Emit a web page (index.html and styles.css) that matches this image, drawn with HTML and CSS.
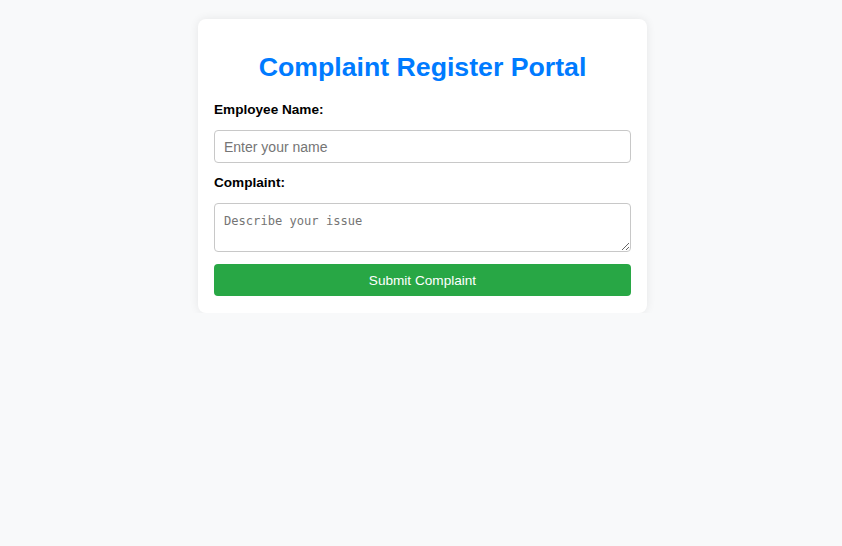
FILE: index.html
```html
<!DOCTYPE html>
<html lang="en">
<head>
<meta charset="UTF-8">
<title>Complaint Register Portal</title>
<link rel="stylesheet" href="styles.css">
</head>
<body>
<div class="page">
  <div class="card">
    <h2 class="title">Complaint Register Portal</h2>
    <form class="form">
      <label class="label" for="name">Employee Name:</label>
      <input class="field" id="name" type="text" placeholder="Enter your name">
      <label class="label" for="complaint">Complaint:</label>
      <textarea class="area" id="complaint" placeholder="Describe your issue"></textarea>
      <button class="submit" type="button">Submit Complaint</button>
    </form>
  </div>
</div>
</body>
</html>
```

FILE: styles.css
```css
html, body {
  margin: 0;
  padding: 0;
  background: #f8f9fa;
  font-family: "Liberation Sans", Arial, sans-serif;
}
.page {
  padding: 19px 0 0 3px;
}
.card {
  width: 417px;
  margin: 0 auto;
  padding: 16px 16px 17px;
  background: #ffffff;
  border-radius: 8px;
  box-shadow: 0 0 10px rgba(0, 0, 0, 0.08);
}
.title {
  margin: 16px 0 19px;
  text-align: center;
  color: #007bff;
  font-size: 26.7px;
  font-weight: bold;
  line-height: 32px;
}
.form {
  display: flex;
  flex-direction: column;
  gap: 12px;
}
.label {
  font-size: 13.6px;
  font-weight: bold;
  color: #000;
  line-height: 16px;
}
.field {
  box-sizing: border-box;
  width: 100%;
  height: 33px;
  margin: 0;
  padding: 8px 9px;
  border: 1px solid #c8c8c8;
  border-radius: 4px;
  font-family: "Liberation Sans", Arial, sans-serif;
  font-size: 14px;
}
.area {
  box-sizing: border-box;
  width: 100%;
  height: 49px;
  margin: 0;
  padding: 10px 9px 6px;
  border: 1px solid #c8c8c8;
  border-radius: 4px;
  font-family: "DejaVu Sans Mono", monospace;
  font-size: 12.1px;
  line-height: 15px;
}
.submit {
  height: 32px;
  margin: 0;
  border: none;
  border-radius: 4px;
  background: #28a745;
  color: #ffffff;
  font-family: "Liberation Sans", Arial, sans-serif;
  font-size: 13.6px;
  cursor: pointer;
}
```
